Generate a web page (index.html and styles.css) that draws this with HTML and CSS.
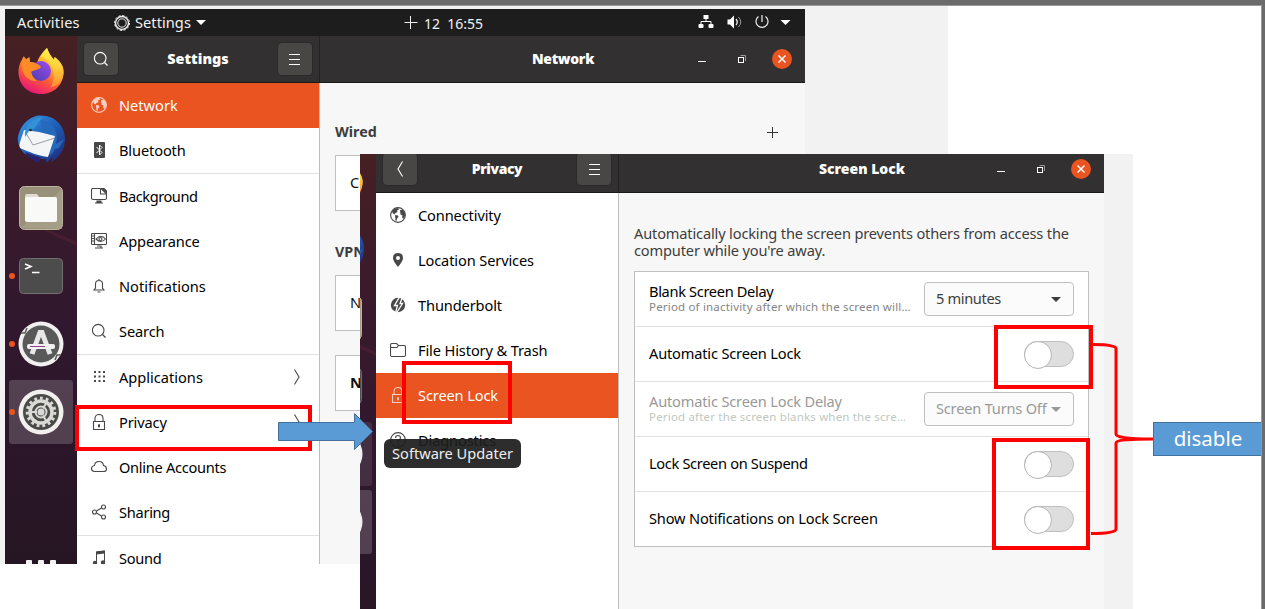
FILE: index.html
```html
<!DOCTYPE html>
<html lang="en">
<head>
<meta charset="utf-8">
<title>Screen Lock settings</title>
<link rel="stylesheet" href="styles.css">
</head>
<body>
<svg class="defs" width="0" height="0">
  <defs>
    <linearGradient id="g-dock" x1="0" y1="0" x2="0" y2="1"><stop offset="0" stop-color="#472023"/><stop offset=".25" stop-color="#3b1a2b"/><stop offset=".5" stop-color="#31182e"/><stop offset=".75" stop-color="#2a1628"/><stop offset="1" stop-color="#241521"/></linearGradient>
    <linearGradient id="g-fox" x1=".8" y1="0" x2=".3" y2="1"><stop offset="0" stop-color="#fff04a"/><stop offset=".35" stop-color="#ffb52a"/><stop offset=".65" stop-color="#ff5a36"/><stop offset="1" stop-color="#e5127e"/></linearGradient>
    <linearGradient id="g-flame" x1="0" y1="0" x2="0" y2="1"><stop offset="0" stop-color="#fff14d"/><stop offset=".5" stop-color="#ffcf3a"/><stop offset="1" stop-color="#ff8a35"/></linearGradient>
    <linearGradient id="g-globe" x1="1" y1="0" x2="0" y2="1"><stop offset="0" stop-color="#a04af0"/><stop offset="1" stop-color="#4a3fae"/></linearGradient>
    <linearGradient id="g-bird" x1="0" y1="0" x2="1" y2="1"><stop offset="0" stop-color="#3a9be6"/><stop offset=".5" stop-color="#1e5fb8"/><stop offset="1" stop-color="#23226e"/></linearGradient>
    <symbol id="dock" viewBox="0 0 72 573">
      <rect width="72" height="573" fill="url(#g-dock)"/>
      <path d="M42 193 72 206V210L38 194Z" fill="#6b2a38" opacity=".3"/>
      <!-- firefox -->
      <path d="M13.500 36C13.500 29 16 25 19 20L20 24 24.500 21 25 26 32 27C34 20 38 16 42 12 44 18 47 21 49 24L49.500 21C55 25 59 30 58.500 37 58 50 48 58 36 58 23 58 13.500 49 13.500 36Z" fill="url(#g-fox)"/>
      <path d="M36 20C37 17 40 14 42 12 44 18 47 21 49 24L49.500 21C55 25 59 30 58.500 37 58 45 53 50 46 51 51 41 50 27 36 20Z" fill="url(#g-flame)"/>
      <circle cx="36" cy="35" r="10" fill="url(#g-globe)"/>
      <path d="M19 21 25 26C28 26 36 29 36 31 34 34 29 34 26 36 27 40 29 43 32 45 24 46 18 39 17 33 16 28 17 24 19 21Z" fill="#ff8a28"/>
      <!-- thunderbird -->
      <path d="M14 97C17 87 25 82 31 80 49 77 60 90 60 103 60 114 54 122 46 126L48 121 41 127 41 123 35 123 20 118C14 113 11 104 14 97Z" fill="url(#g-bird)"/>
      <path d="M20 116 36 122 34 127C28 125 23 121 20 116Z" fill="#2a226f"/>
      <path d="M36 84C48 86 54 95 51 108L59 103 54 112 50 113 47 118 43 119Z" fill="#2668ba"/>
      <path d="M19 94 34 96 50 100 43 121C34 120 24 116 15 112Q14 108 15 106Z" fill="#f4f5f7"/>
      <path d="M21 97 28 109 50 102" fill="none" stroke="#9aa0a8"/>
      <path d="M20 101C19 91 26 82 38 81 32 86 33 92 24 95Z" fill="#3392d6"/><circle cx="25.500" cy="94" r="1.300" fill="#252525"/>
      <!-- files -->
      <rect x="14.500" y="150.500" width="43" height="43" rx="5" fill="#989079" stroke="#bab59e"/>
      <path d="M16 192 57 153V193Z" fill="#b1aa93" opacity=".55"/>
      <path d="M20 160q0-2 2-2h10l2 3h3v7H20Z" fill="#e1dbd1"/><rect x="20" y="161" width="32" height="25" rx="2" fill="#f9f9f8"/>
      <!-- terminal -->
      <rect x="14.500" y="222.500" width="43" height="35" rx="4" fill="#4c4c4c" stroke="#6f6f6f"/>
      <path d="M20 228 26 230.500 20 233M27 236.500H34.500" fill="none" stroke="#fff" stroke-width="1.500"/>
      <!-- software updater -->
      <circle cx="36" cy="308" r="22.500" fill="#f0f0f0"/><circle cx="36" cy="308" r="18.500" fill="#595959"/>
      <path d="M27 318 35 296.500H37L45 318" fill="none" stroke="#e8e8e8" stroke-width="5"/>
      <rect x="22" y="308" width="28" height="5" rx="2" fill="#f2f2f2"/><path d="M25 310.500H40" stroke="#963a90"/>
      <path d="M16 297H20L22 292M56 319H52L50 324" fill="none" stroke="#595959" stroke-width="1.500"/>
      <!-- settings -->
      <rect x="4" y="344" width="64" height="64" rx="3" fill="#fff" opacity=".18"/>
      <circle cx="36" cy="376" r="22.500" fill="#f1f0ec"/><circle cx="36" cy="376" r="18" fill="#4a4a49"/>
      <circle cx="36" cy="376" r="13.800" fill="none" stroke="#d9d9d6" stroke-width="3" stroke-dasharray="2.800 2.980"/>
      <circle cx="36" cy="376" r="11" fill="none" stroke="#d9d9d6" stroke-width="3.500"/>
      <circle cx="36" cy="376" r="5.500" fill="none" stroke="#d9d9d6" stroke-width="2"/><circle cx="36" cy="376" r="3.500" fill="#d9d9d6"/><path d="M32 376H26M38 372.500 41 367.500M38 379.500 41 384.500" stroke="#d9d9d6" stroke-width="2"/>
      <g fill="#e95420"><circle cx="7" cy="240" r="3"/><circle cx="7" cy="308" r="3"/><circle cx="7" cy="376" r="3"/></g>
      <g fill="#f2f2f2"><rect x="21" y="524" width="6" height="6" rx="1"/><rect x="33" y="524" width="6" height="6" rx="1"/><rect x="45" y="524" width="6" height="6" rx="1"/></g>
    </symbol>
    <symbol id="globe" viewBox="0 0 16 16"><circle cx="8" cy="8" r="7.400" fill="none" stroke="currentColor" stroke-width="1.100"/><path d="M2 4 5 1.500 8 1 9 2.500 7 3.500 7.500 5 5.500 6 4.500 7.500 2.500 6ZM5 8 8 8.500 8.500 10 7 11.500 6.500 14 5.500 13.500ZM10 3 13 3 15 6 15 9 13.500 12 12 10.500 12.500 8.500 10.500 7.500Z" fill="currentColor"/></symbol>
    <symbol id="search" viewBox="0 0 16 16"><circle cx="7.200" cy="7.200" r="5.800" fill="none" stroke="currentColor" stroke-width="1.100"/><path d="M11.500 11.500 14.500 14.500" stroke="currentColor" stroke-width="1.300"/></symbol>
    <symbol id="lock" viewBox="0 0 16 16"><path d="M2.500 7.500H13.500V15.500H2.500ZM4 7V4.500C4 2 5.500.5 8 .5S12 2 12 4.500V7" fill="none" stroke="currentColor" stroke-width="1.100"/><rect x="7" y="10.300" width="2" height="3" fill="currentColor"/></symbol>
    <symbol id="chev" viewBox="0 0 8 16"><path d="M1.500.5 6 8 1.500 15.500" fill="none" stroke="currentColor" stroke-width="1.100"/></symbol>
  </defs>
</svg>

<main class="page">
  <section class="shot back">
    <header class="topbar">
      <span class="activities">Activities</span>
      <svg class="gear" viewBox="0 0 16 16" width="16" height="16"><circle cx="8" cy="8" r="6.500" stroke-width="1.400"/><circle cx="8" cy="8" r="4.200"/><circle cx="8" cy="8" r="7.500" stroke-width="1" stroke-dasharray="2.200 1.727"/></svg>
      <span class="appname">Settings</span><i class="caret light"></i>
      <svg class="plus" viewBox="0 0 14 14" width="14" height="14"><path d="M.5 6.500H13.500M6.500 0V13"/></svg>
      <span class="clock">12&nbsp; 16:55</span>
      <svg class="tray" viewBox="0 0 94 16" width="94" height="16"><g fill="#fff"><rect x="5.500" y="1" width="5" height="4"/><rect x=".5" y="10" width="5" height="4" rx="1"/><rect x="10.500" y="10" width="5" height="4" rx="1"/><path d="M29.500 5.500H32L36 1.500V14.500L32 10.500H29.500Z"/><path d="M82.500 6H92.500L87.500 11Z"/></g><path d="M8 5V8M3 10V7.500H13V10" fill="none" stroke="#fff"/><path d="M38 5Q40.500 8 38 11" fill="none" stroke="#eee" stroke-width="1.300"/><path d="M40.500 3Q45 8 40.500 13" fill="none" stroke="#999"/><path d="M60.500 2.500A6 6 0 1 0 67.500 2.500M64 1V8" fill="none" stroke="#eee" stroke-width="1.200"/></svg>
    </header>
    <div class="desktop">
      <svg class="dock" viewBox="0 0 72 528" width="72" height="528"><use href="#dock" width="72" height="573"/></svg>
      <div class="window">
        <header class="titlebar">
          <div class="side-head"><span class="hbtn"><svg width="16" height="16"><use href="#search"/></svg></span><b class="t-settings">Settings</b><span class="hbtn burger"><i></i></span></div>
          <div class="main-head"><b class="t-network">Network</b><span class="wmin"></span><svg class="wmax" width="9" height="9"><path d="M2.500.5H7.500V6" stroke="#999"/><rect x=".5" y="2.500" width="5" height="5" stroke="#fff"/></svg><svg class="wclose" width="20" height="20"><circle cx="10" cy="10" r="10"/><path d="M6.500 6.500 13.500 13.500M13.500 6.500 6.500 13.500"/></svg></div>
        </header>
        <div class="content">
          <nav class="sidebar">
            <a class="item sel"><svg width="16" height="16"><use href="#globe"/></svg><span class="wide">Network</span></a>
            <a class="item"><svg width="16" height="16"><rect x="3" y="0" width="11" height="16" rx="1" fill="#484848"/><path d="M5.500 5 11 10.500 8.500 13V3L11 5.500 5.500 11" fill="none" stroke="#fff"/></svg><span>Bluetooth</span></a>
            <a class="item rule"><svg width="16" height="16" class="ln"><path d="M9 .5H2Q.5.5.5 2V10Q.5 11.500 2 11.500H14Q15.500 11.500 15.500 10V6"/><path d="M9.500.5V6H15.500" /><path d="M10 .5H13L15.500 3V6ZM6 13H10V15H6ZM4 15H12" fill="#484848"/></svg><span class="tight">Background</span></a>
            <a class="item"><svg width="16" height="16" class="ln"><rect x=".5" y=".5" width="15" height="11" rx="1"/><path d="M3.500 1V11M1 3H3M1 5.500H3M1 8H3M5 6Q10 .5 14.500 6 10 11 5 6ZM4 15H12M6 13H10V15"/><circle cx="9.500" cy="6" r="1.500"/></svg><span>Appearance</span></a>
            <a class="item"><svg width="16" height="16" class="ln"><path d="M3 12H13L11.500 10V6Q11.500 2.500 8 2.500T4.500 6V10ZM8 1V2.500M6.500 14H9.500"/></svg><span class="wide">Notifications</span></a>
            <a class="item"><svg width="16" height="16"><use href="#search"/></svg><span>Search</span></a>
            <a class="item rule"><svg width="16" height="16"><path d="M3 3H14M3 7.500H14M3 12H14" stroke="#484848" stroke-width="2" stroke-dasharray="2 2.500"/></svg><span class="wide">Applications</span><svg class="go" width="8" height="16"><use href="#chev"/></svg></a>
            <a class="item"><svg width="16" height="16"><use href="#lock"/></svg><span>Privacy</span><svg class="go" width="8" height="16"><use href="#chev"/></svg></a>
            <a class="item"><svg width="16" height="16" class="ln"><path d="M3.500 12.500Q.5 12.500.5 9.500.5 7 3.500 6.500 4 2.500 8 2.500T12.500 6.500Q15.500 7 15.500 10 15.500 12.500 12.500 12.500Z"/></svg><span class="mid">Online Accounts</span></a>
            <a class="item"><svg width="16" height="16" class="ln"><circle cx="3.500" cy="8" r="2"/><circle cx="12.500" cy="3" r="2"/><circle cx="12.500" cy="13" r="2"/><path d="M5.500 7 10.500 4M5.500 9 10.500 12"/></svg><span class="mid">Sharing</span></a>
            <a class="item rule"><svg width="16" height="16"><path d="M5.500 13V2L13.500 1V12" fill="none" stroke="#484848"/><path d="M5 1.500 14 .5V3.500L5 4.500Z" fill="#484848"/><circle cx="4" cy="13" r="2.200" fill="#484848"/><circle cx="12" cy="12.500" r="2.200" fill="#484848"/></svg><span class="mid">Sound</span></a>
          </nav>
          <div class="net">
            <div class="nethead"><b>Wired</b><svg width="11" height="11"><path d="M5.500 0V11M0 5.500H11" stroke="#333"/></svg></div>
            <div class="netcard">Co</div>
            <div class="nethead second"><b>VPN</b></div>
            <div class="netcard">N</div>
            <div class="netcard third"><b>N</b></div>
          </div>
        </div>
      </div>
    </div>
  </section>

  <section class="shot front">
    <svg class="dock" viewBox="56 8 16 455" width="16" height="455"><use href="#dock" width="72" height="573"/><rect x="4" y="276" width="64" height="64" rx="3" fill="#fff" opacity=".1"/></svg>
    <div class="window">
      <header class="titlebar">
        <div class="side-head"><span class="hbtn"><svg width="8" height="16" class="flip"><use href="#chev"/></svg></span><b class="t-privacy">Privacy</b><span class="hbtn burger"><i></i></span></div>
        <div class="main-head"><b class="t-lock">Screen Lock</b><span class="wmin"></span><svg class="wmax" width="9" height="9"><path d="M2.500.5H7.500V6" stroke="#999"/><rect x=".5" y="2.500" width="5" height="5" stroke="#fff"/></svg><svg class="wclose" width="20" height="20"><circle cx="10" cy="10" r="10"/><path d="M6.500 6.500 13.500 13.500M13.500 6.500 6.500 13.500"/></svg></div>
      </header>
      <div class="content">
        <nav class="sidebar">
          <a class="item"><svg width="16" height="16"><use href="#globe"/></svg><span>Connectivity</span></a>
          <a class="item"><svg width="16" height="16"><path fill-rule="evenodd" d="M8 1Q13 1 13 6 13 9 8 15 3 9 3 6 3 1 8 1ZM8 4A2 2 0 1 0 8 8 2 2 0 1 0 8 4Z" fill="#484848"/></svg><span>Location Services</span></a>
          <a class="item"><svg width="16" height="16"><circle cx="8" cy="8" r="7.200" fill="#484848"/><path d="M9.500 0 4.500 8.500H7.500L5.500 16M12.500 0 10 6.500H12.500L6.500 16" fill="none" stroke="#fff" stroke-width="1.300"/></svg><span>Thunderbolt</span></a>
          <a class="item"><svg width="16" height="16" class="ln"><path d="M.5 4.500V3Q.5 1.500 2 1.500H6.500L8.500 3.500H14Q15.500 3.500 15.500 5V13Q15.500 14.500 14 14.500H2Q.5 14.500.5 13V4.500Q.5 5.500 2 5.500H7L8.500 3.500"/></svg><span>File History &amp; Trash</span></a>
          <a class="item sel"><svg width="16" height="16"><use href="#lock"/></svg><span>Screen Lock</span></a>
          <a class="item"><svg width="16" height="16" class="ln"><circle cx="8" cy="8" r="7.400"/><path d="M5.500 6Q5.500 3.500 8 3.500T10.500 6Q10.500 7.500 8 8.500V10.500M8 12V13.500"/></svg><span>Diagnostics</span></a>
        </nav>
        <div class="lockpane">
          <p>Automatically locking the screen prevents others from access the<br>computer while you're away.</p>
          <div class="list">
            <div class="row"><div class="lbl"><span class="tight">Blank Screen Delay</span><small>Period of inactivity after which the screen will…</small></div><div class="select">5 minutes<i class="caret"></i></div></div>
            <div class="row"><span>Automatic Screen Lock</span><i class="switch"></i></div>
            <div class="row off"><div class="lbl"><span>Automatic Screen Lock Delay</span><small>Period after the screen blanks when the scre…</small></div><div class="select loose">Screen Turns Off<i class="caret"></i></div></div>
            <div class="row"><span class="tight">Lock Screen on Suspend</span><i class="switch"></i></div>
            <div class="row"><span>Show Notifications on Lock Screen</span><i class="switch"></i></div>
          </div>
        </div>
      </div>
    </div>
    <div class="tooltip">Software Updater</div>
  </section>

  <div class="mark m1"></div><div class="mark m2"></div><div class="mark m3"></div><div class="mark m4"></div>
  <svg class="overlay" viewBox="0 0 1265 609" width="1265" height="609">
    <path d="M278.500 422.500H354.500V413.500L372.500 431.500 354.500 449.500V440.500H278.500Z" fill="#5b9bd5" stroke="#41719c"/>
    <path d="M1093 344.500C1108 344.500 1116 346 1116 348.500V434C1116 437 1125 439 1153 439 1125 439 1116 440 1116 443V529C1116 532 1107 533.500 1091 533.500" fill="none" stroke="#f00" stroke-width="3"/>
  </svg>
  <div class="callout">disable</div>
</main>
</body>
</html>
```
FILE: styles.css
```css
* { box-sizing: border-box; }
body { margin: 0; background: #fff; font: 14.6px/20px "Noto Sans", "Open Sans", sans-serif; color: #111; }
.defs { position: absolute; }
.page { position: relative; width: 1265px; height: 609px; overflow: hidden; border-top: 5px solid #6b6b6b; background: #fff; }
.page::before { content: ""; position: absolute; left: 0; top: 0; width: 100%; height: 1px; background: #999; z-index: 2; }
.page::after { content: ""; position: absolute; right: 0; top: 0; width: 3px; height: 100%; background: #6b6b6b; border-left: 1px solid #999; z-index: 5; }
.shot { position: absolute; background: #f2f2f2; }
.back { left: 0; top: 1px; width: 948px; height: 558px; padding: 3px 143px 0 5px; }
.front { left: 360px; top: 149px; width: 773px; height: 455px; display: flex; overflow: hidden; }
.topbar { height: 27px; background: #1d1d1d; color: #f2f2f2; display: flex; align-items: center; padding-left: 12px; }
.topbar span { padding-bottom: 2px; }
.activities { width: 97px; letter-spacing: .2px; }
.gear { fill: none; stroke: #eee; stroke-width: 1; }
.appname { margin-left: 5px; width: 56px; letter-spacing: .05px; }
.caret { width: 0; border: 5px solid transparent; border-top-color: #3d3d3d; border-bottom: 0; }
.caret.light { border-top-color: #fff; margin-left: 5px; }
.plus { margin-left: 198px; stroke: #eee; }
.clock { margin-left: 6px; width: 60px; font-size: 14px; white-space: nowrap; position: relative; top: 2px; }
.tray { margin-left: 214px; margin-bottom: 2px; }
.desktop { display: flex; height: 528px; overflow: hidden; }
.dock { flex: none; display: block; }
.window { width: 728px; flex: none; height: 100%; overflow: hidden; display: flex; flex-direction: column; }
.titlebar { height: 47px; flex: none; display: flex; background: #323031; border-bottom: 1px solid #191919; color: #fff; font-weight: bold; }
.front .titlebar { height: 39px; }
.front .titlebar > div { height: 46px; margin-top: -8px; }
.side-head { width: 243px; border-right: 1px solid #232122; display: flex; align-items: center; justify-content: space-between; padding: 0 7px; }
.hbtn { width: 34px; height: 32px; background: #484745; border-radius: 4px; display: flex; align-items: center; justify-content: center; box-shadow: 0 0 0 1px #2b292a; }
.burger i { width: 11px; height: 11px; border-top: 1px solid #fff; border-bottom: 1px solid #fff; background: linear-gradient(#fff, #fff) center / 100% 1px no-repeat; }
.t-settings { font-size: 14.4px; }
.t-network { font-size: 14px; letter-spacing: -.3px; }
.t-privacy { font-size: 14px; letter-spacing: -.4px; }
.t-lock { font-size: 14px; }
.flip { transform: scaleX(-1); }
.main-head { width: 485px; display: flex; align-items: center; padding-right: 13px; }
.main-head b { width: 378px; padding-left: 108px; text-align: center; white-space: nowrap; }
.wmin { width: 8px; height: 1px; background: #fff; margin: 5px 0 0; }
.wmax { margin-left: 32px; fill: none; }
.wclose { margin-left: auto; }
.wclose circle { fill: #e95420; }
.wclose path { stroke: #fff; stroke-width: 1.5; }
.content { display: flex; flex: 1; min-height: 0; }
.sidebar { width: 243px; background: #fff; border-right: 1px solid #bdbdbd; overflow: hidden; }
.item { display: flex; align-items: center; height: 45px; padding-left: 14px; color: #484848; }
.item > svg { flex: none; margin-bottom: 1px; }
.item span { color: #000; margin-left: 12px; padding-bottom: 2px; white-space: nowrap; letter-spacing: -.12px; }
.item.rule { height: 46px; border-top: 1px solid #e2e2e2; }
.item.sel { background: #e95420; color: #f9cfc0; }
.item.sel span { color: #fff; }
.item .tight { letter-spacing: -.45px; }
.item .mid { letter-spacing: -.28px; }
.item .wide { letter-spacing: 0; }
.ln { fill: none; stroke: #484848; stroke-width: 1.1; }
.item .go { margin-left: auto; margin-right: 18px; margin-bottom: 2px; }
.net, .lockpane { flex: 1; background: #f7f7f7; padding: 39px 15px 0; color: #3d3d3d; }
.nethead { height: 33px; display: flex; justify-content: space-between; padding-right: 12px; font-size: 14.3px; }
.nethead svg { margin-top: 5px; }
.nethead.second { margin-top: 31px; }
.netcard { height: 56px; border: 1px solid #bfbfbf; background: #fff; padding: 16px 14px; color: #111; }
.netcard.third { margin-top: 24px; }
.lockpane { padding-top: 32px; }
.lockpane p { margin: 0 0 12px; line-height: 17px; white-space: nowrap; letter-spacing: -.155px; }
.list { width: 455px; border: 1px solid #bfbfbf; background: #fff; color: #000; }
.row { height: 55px; padding: 0 14px; display: flex; align-items: center; justify-content: space-between; border-bottom: 1px solid #e2e2e2; white-space: nowrap; }
.row span { padding-bottom: 2px; letter-spacing: -.17px; }
.row .tight { letter-spacing: -.33px; }
.row:last-child { height: 54px; border: 0; }
.lbl { display: flex; flex-direction: column; padding-bottom: 2px; }
.row .lbl span { line-height: 17px; padding: 0; }
.lbl small { font-size: 11.5px; line-height: 14px; color: #858585; letter-spacing: .18px; }
.select { width: 150px; height: 34px; border: 1px solid #bfbfbf; border-radius: 4px; background: #fbfbfb; color: #3d3d3d; display: flex; align-items: center; justify-content: space-between; padding: 0 12px 2px 11px; letter-spacing: -.35px; }
.select.loose { letter-spacing: -.2px; }
.select .caret { margin-top: 2px; }
.off, .off .select { color: #999; }
.off small { color: #c0c8c0; }
.off .caret { border-top-color: #999; }
.switch { width: 50px; height: 26px; margin-bottom: 1px; border: 1px solid #bfbfbf; border-radius: 13px; background: #dedede; }
.switch::before { content: ""; display: block; width: 26px; height: 26px; margin: -1px; border: 1px solid #b5b5b5; border-radius: 50%; background: #fff; }
.tooltip { position: absolute; left: 24px; top: 285px; width: 137px; height: 29px; border-radius: 6px; background: rgba(29,29,29,.93); color: #eee; line-height: 29px; text-align: center; white-space: nowrap; }
.mark { position: absolute; border: 4px solid #f00; }
.m1 { left: 75px; top: 400px; width: 237px; height: 46px; }
.m2 { left: 402px; top: 356px; width: 110px; height: 63px; }
.m3 { left: 994px; top: 320px; width: 99px; height: 64px; }
.m4 { left: 992px; top: 433px; width: 98px; height: 112px; }
.overlay { position: absolute; left: 0; top: -5px; }
.callout { position: absolute; left: 1153px; top: 417px; width: 110px; height: 34px; background: #5b9bd5; border: 1px solid #41719c; color: #fff; font-size: 20.5px; line-height: 31px; text-align: center; }
```
